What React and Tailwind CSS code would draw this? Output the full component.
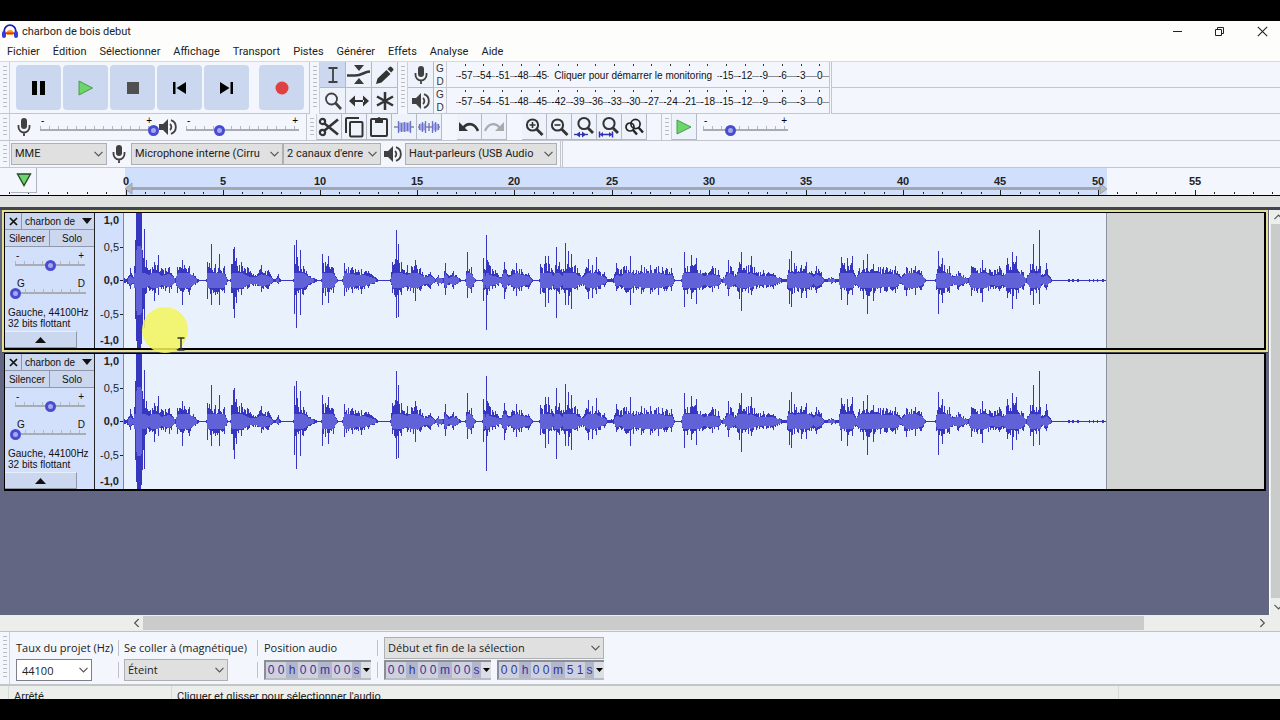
import React from "react";
import clsx from "clsx";

const MENUS = ["Fichier", "Édition", "Sélectionner", "Affichage", "Transport", "Pistes", "Générer", "Effets", "Analyse", "Aide"];
const METER_DB = [-57, -54, -51, -48, -45, -42, -39, -36, -33, -30, -27, -24, -21, -18, -15, -12, -9, -6, -3, 0];

// [x, peak above zero, peak below zero], in pixels from the clip start
const PEAKS = [
  [0, 2, 2], [3, 2, 3], [6, 12, 8], [9, 3, 3], [11, 40, 38], [12, 67, 60], [13, 67, 67], [14, 67, 67], [15, 67, 67], [16, 67, 67], [17, 67, 63],
  [18, 30, 48], [19, 22, 28], [20, 51, 47], [22, 20, 12], [25, 10, 10], [30, 18, 20], [34, 25, 14], [37, 12, 8], [41, 12, 10], [45, 13, 12],
  [51, 2, 2], [53, 13, 12], [58, 20, 24], [65, 14, 14], [71, 4, 4], [74, 1, 1], [82, 1, 1], [83, 18, 18], [87, 36, 24], [91, 16, 14],
  [95, 26, 24], [100, 14, 12], [103, 1, 1], [106, 1, 1], [107, 16, 12], [109, 31, 28], [110, 33, 37], [112, 22, 22], [117, 18, 14], [124, 12, 7],
  [131, 5, 5], [137, 15, 11], [144, 10, 8], [149, 1, 1], [154, 6, 3], [156, 1, 1], [169, 1, 1], [170, 35, 33], [172, 40, 47], [176, 30, 34],
  [179, 14, 14], [186, 4, 4], [192, 1, 1], [197, 1, 1], [198, 26, 24], [201, 18, 15], [204, 24, 22], [209, 12, 12], [213, 1, 1], [218, 1, 1],
  [220, 17, 15], [228, 13, 12], [234, 10, 9], [237, 11, 13], [244, 9, 7], [253, 1, 1], [266, 1, 1], [268, 18, 12], [272, 50, 37], [274, 36, 36],
  [277, 18, 14], [283, 15, 10], [291, 20, 20], [296, 12, 10], [301, 5, 5], [306, 8, 8], [311, 1, 1], [314, 5, 5], [319, 2, 2], [321, 17, 14],
  [324, 5, 4], [329, 9, 8], [336, 1, 1], [341, 1, 1], [343, 28, 17], [347, 13, 12], [351, 1, 1], [358, 1, 1], [359, 22, 20], [361, 10, 8],
  [362, 45, 49], [365, 15, 10], [371, 10, 7], [377, 3, 3], [380, 18, 18], [384, 5, 5], [392, 17, 15], [397, 11, 10], [404, 7, 8], [408, 1, 1],
  [415, 1, 1], [416, 16, 13], [421, 24, 26], [424, 24, 22], [429, 8, 8], [432, 33, 37], [435, 18, 13], [438, 8, 8], [441, 37, 24], [444, 29, 24],
  [447, 26, 28], [453, 12, 9], [459, 5, 5], [464, 21, 18], [468, 15, 17], [472, 23, 13], [476, 8, 8], [480, 8, 6], [483, 1, 1], [489, 2, 2],
  [492, 17, 10], [497, 11, 8], [506, 24, 24], [509, 10, 12], [517, 15, 13], [526, 15, 13], [534, 14, 14], [542, 12, 10], [547, 12, 10], [550, 1, 1],
  [557, 1, 1], [560, 28, 26], [563, 14, 13], [567, 25, 18], [572, 22, 23], [579, 7, 8], [588, 14, 11], [594, 10, 8], [597, 1, 1], [601, 5, 5],
  [604, 20, 15], [611, 6, 6], [615, 18, 18], [617, 28, 30], [624, 15, 12], [627, 24, 14], [632, 8, 8], [639, 10, 7], [649, 7, 8], [657, 2, 2],
  [662, 1, 1], [665, 21, 23], [667, 29, 26], [670, 17, 12], [677, 15, 17], [682, 18, 17], [689, 6, 7], [692, 14, 12], [697, 8, 6], [700, 1, 1],
  [707, 3, 3], [714, 1, 1], [717, 23, 19], [723, 22, 24], [728, 24, 14], [731, 5, 5], [739, 20, 18], [743, 26, 33], [749, 16, 20], [756, 13, 12],
  [762, 13, 11], [771, 14, 12], [777, 3, 3], [782, 13, 15], [791, 14, 14], [797, 9, 9], [801, 1, 1], [811, 1, 1], [814, 29, 33], [818, 22, 22],
  [825, 14, 12], [828, 5, 5], [834, 9, 9], [844, 2, 2], [847, 14, 15], [858, 20, 21], [866, 10, 8], [875, 14, 10], [879, 7, 7], [883, 22, 17],
  [888, 28, 28], [892, 24, 18], [899, 8, 9], [902, 2, 2], [906, 16, 14], [909, 36, 24], [912, 14, 12], [915, 50, 23], [917, 5, 5], [922, 17, 9],
  [927, 1, 1], [944, 1, 1], [945, 1, 1], [948, 1, 1], [949, 1, 1], [953, 1, 1], [954, 1, 1], [965, 1, 1], [969, 1, 1], [973, 1, 1], [978, 1, 1],
  [979, 1, 1], [981, 1, 1],
];

function buildWave() {
  let seed = 7;
  const rand = () => {
    seed = (seed * 16807) % 2147483647;
    return seed / 2147483647;
  };
  const zero = 67;
  let outer = "";
  let inner = "";
  let i = 0;
  for (let x = 0; x <= 981; x++) {
    while (i < PEAKS.length - 2 && PEAKS[i + 1][0] <= x) i++;
    const a = PEAKS[i];
    const b = PEAKS[i + 1];
    const t = (x - a[0]) / (b[0] - a[0]);
    const quiet = t > 0 && a[1] === 1 && b[1] === 1;
    let up = a[1] + (b[1] - a[1]) * t;
    let down = a[2] + (b[2] - a[2]) * t;
    const rms = Math.min(x > 11 && x < 18 ? 34 : 7, Math.min(up, down) * 0.5);
    if (t > 0 && t < 1) {
      up = Math.min(up, 8 + up * 0.4) * (0.45 + 0.55 * rand() ** 1.3);
      down = Math.min(down, 7 + down * 0.35) * (0.45 + 0.5 * rand() ** 1.3);
    }
    outer += `M${x + 0.5} ${zero - (quiet ? 0 : Math.round(up))}V${zero + 1 + (quiet ? 0 : Math.round(down))}`;
    if (rms > 1) inner += `M${x + 0.5} ${zero - Math.round(rms)}V${zero + 1 + Math.round(rms)}`;
  }
  return { outer, inner };
}

const WAVE = buildWave();

const MicIcon = ({ className }) => (
  <svg width="16" height="20" viewBox="0 0 16 20" className={clsx("shrink-0", className)} fill="none" stroke="#404040" aria-hidden="true">
    <rect x="5" y="1" width="6" height="11" rx="3" fill="#404040" stroke="none" />
    <path d="M2.5 8v2a5.5 5.5 0 0 0 11 0V8M8 15.500V19" strokeWidth="1.800" />
  </svg>
);

const SpeakerIcon = () => (
  <svg width="18" height="18" viewBox="0 0 18 18" className="shrink-0" fill="none" stroke="#404040" aria-hidden="true">
    <path d="M0 6h4l5-5v16l-5-5H0z" fill="#404040" stroke="none" />
    <path d="M11 6a4 4 0 0 1 0 6" strokeWidth="1.800" />
    <path d="M12 2.200a7.200 7.200 0 0 1 0 13.600" strokeWidth="1.800" />
  </svg>
);

const Glass = ({ children, small }) => (
  <svg width="22" height="22" viewBox="0 0 22 22" fill="none" stroke="#333" aria-hidden="true">
    <circle cx={small ? 11 : 9.5} cy={small ? 7.5 : 9} r="5.600" strokeWidth="2" />
    <path d={small ? "M15 12l5 5" : "M13.5 13l6 6"} strokeWidth="2.800" />
    {children}
  </svg>
);

const Chevron = ({ className }) => (
  <svg width="9" height="6" viewBox="0 0 9 6" className={className} fill="none" stroke="#555" strokeWidth="1.200" aria-hidden="true">
    <path d="M.5.8l4 4 4-4" />
  </svg>
);

function Grabber() {
  return (
    <div className="flex w-[10px] shrink-0 justify-center self-stretch border-r border-[#ccd0d6] py-1">
      <div className="w-1 bg-[repeating-linear-gradient(#b9bcc1_0_1px,transparent_1px_4px)]" />
    </div>
  );
}

function Select({ label, value, className }) {
  return (
    <div className={clsx("grid shrink-0 items-center", className)}>
      <select
        aria-label={label}
        className="col-start-1 row-start-1 h-[22px] w-full appearance-none border border-[#adb0b3] bg-[#dfe0df] pl-[3px] pr-4 pt-px text-[#222]"
      >
        <option>{value}</option>
      </select>
      <Chevron className="pointer-events-none col-start-1 row-start-1 mr-1 justify-self-end" />
    </div>
  );
}

function Slider({ label, value, ends = ["-", "+"], className }) {
  return (
    <div className={clsx("flex shrink-0 flex-col", className)}>
      <div className="flex h-[6px] items-center justify-between px-[7px] text-[10px] leading-[6px]">
        <span>{ends[0]}</span>
        <span>{ends[1]}</span>
      </div>
      <div className="grid items-center">
        <div className="col-start-1 row-start-1 mx-[6px] mb-1 h-[5px] border-b-2 border-[#a9acb2] bg-[repeating-linear-gradient(90deg,#b4b7bd_0_1px,transparent_1px_9px)]" />
        <input
          type="range"
          aria-label={label}
          defaultValue={value}
          className="col-start-1 row-start-1 h-3 w-full appearance-none bg-transparent [&::-webkit-slider-thumb]:size-[11px] [&::-webkit-slider-thumb]:appearance-none [&::-webkit-slider-thumb]:rounded-full [&::-webkit-slider-thumb]:border-[3px] [&::-webkit-slider-thumb]:border-[#4a4cd0] [&::-webkit-slider-thumb]:bg-[#a5a8ee]"
        />
      </div>
    </div>
  );
}

function TransportButton({ label, children, className }) {
  return (
    <button aria-label={label} className={clsx("flex size-[45px] items-center justify-center rounded bg-[#cbd7ee]", className)}>
      {children}
    </button>
  );
}

function ToolButton({ label, active, narrow, children }) {
  return (
    <button
      aria-label={label}
      className={clsx(
        "flex h-[26px] shrink-0 items-center justify-center overflow-hidden border-b border-r border-[#b4b9c4]",
        narrow ? "w-[25px]" : "w-[26px]",
        active ? "bg-[#cbd8f0]" : "bg-[#edf2fb]"
      )}
    >
      {children}
    </button>
  );
}

function Meter({ label, icon, message }) {
  const cells = message ? METER_DB.filter((db) => db < -42 || db > -18) : METER_DB;
  return (
    <div className="flex h-[26px] w-[421px] border-b border-[#c3c6cc]">
      <ToolButton label={label}>{icon}</ToolButton>
      <div className="flex w-[12px] flex-col items-center text-[10px] leading-[13px] text-[#333]">
        <span>G</span>
        <span>D</span>
      </div>
      <div className="flex-1 border-l border-[#c9ccd2] pl-[9px]">
        <div className="grid h-[6px] grid-cols-[repeat(20,minmax(0,1fr))] items-center justify-items-center">
          {METER_DB.map((db) => (
            <i key={db} className="h-[2px] w-px bg-[#333]" />
          ))}
        </div>
        <div className="grid h-[14px] grid-cols-[repeat(20,minmax(0,1fr))] items-center text-[10px] text-[#111]">
          {cells.map((db) => (
            <React.Fragment key={db}>
              {message && db === -15 && <span className="col-span-9 whitespace-nowrap text-center">{message}</span>}
              <span className="flex items-center justify-center">
                <i className="mt-px h-px flex-1 bg-[#8b8e94]" />
                {db}
                <i className="mt-px h-px flex-1 bg-[#8b8e94]" />
              </span>
            </React.Fragment>
          ))}
        </div>
      </div>
    </div>
  );
}

function Timeline() {
  const seconds = Array.from({ length: 66 }, (_, i) => i - 6);
  return (
    <div className="grid h-[28px] shrink-0 border-b border-black bg-[#f3f6fd]">
      <svg className="col-start-1 row-start-1 h-[27px] w-full" aria-label="Règle temporelle">
        <rect x="125" y="0" width="982" height="27" fill="#d0dffb" />
        <path d="M128 20.500H1105" stroke="#a2a6ae" strokeWidth="3" />
        <path d="M125 21l7-6v11zM1107 21l-7-6v11z" fill="#b5b9c1" stroke="#858990" strokeWidth=".6" />
        {seconds.map((s) => {
          const x = Math.round(125.5 + s * 19.44);
          const major = s % 5 === 0 && s >= 0;
          return <rect key={s} x={x} y={major ? 22 : 24} width="1" height={major ? 5 : 2} fill="#222" />;
        })}
        {seconds
          .filter((s) => s >= 0 && s < 60 && s % 5 === 0)
          .map((s) => (
            <text key={s} x={Math.round(125.5 + s * 19.44)} y="17" textAnchor="middle" fontSize="11" fontWeight="bold" fill="#222">
              {s}
            </text>
          ))}
      </svg>
      <button
        aria-label="Options de la règle"
        className="col-start-1 row-start-1 ml-[11px] flex h-[25px] w-[26px] items-center justify-center border-b border-r border-[#aeb3be] bg-[#f3f6fd]"
      >
        <svg width="16" height="14" viewBox="0 0 16 14" aria-hidden="true">
          <path d="M1.500 1h13L8 12.500z" fill="#6cd66c" stroke="#2b4a2b" strokeWidth="1.400" />
        </svg>
      </button>
    </div>
  );
}

const SCALE = [
  { text: "1,0", className: "font-bold" },
  { text: "0,5", className: "mt-[13px]", tick: true },
  { text: "0,0", className: "mt-[19px] font-bold", tick: true },
  { text: "-0,5", className: "mt-[20px]", tick: true },
  { text: "-1,0", className: "mt-[12px] font-bold" },
];

function Track({ selected }) {
  return (
    <section className={clsx("border-2", selected ? "border-[#e4df93]" : "border-x-transparent border-y-0")}>
      <div className="flex h-[138px] border-b-2 border-l border-r-2 border-t border-black">
        <div className="flex w-[90px] shrink-0 flex-col border-r border-[#222] bg-[#d2e0fb] text-[10px] text-[#111]">
          <div className="flex h-[17px] shrink-0 border-b border-[#8f97a8] bg-[#cbd7ee]">
            <button aria-label="Fermer la piste" className="flex w-[17px] items-center justify-center border-r border-[#8f97a8]">
              <svg width="9" height="9" viewBox="0 0 9 9" stroke="#111" strokeWidth="1.700" aria-hidden="true">
                <path d="M1 1l7 7M8 1L1 8" />
              </svg>
            </button>
            <button className="flex flex-1 items-center justify-between whitespace-nowrap pl-[3px] pr-[2px]">
              charbon de
              <svg width="10" height="6" viewBox="0 0 10 6" aria-hidden="true">
                <path d="M0 0h10L5 6z" fill="#111" />
              </svg>
            </button>
          </div>
          <div className="flex h-[17px] shrink-0 border-b border-[#8f97a8] bg-[#cbd7ee]">
            <button className="w-[45px] border-r border-[#8f97a8]">Silencer</button>
            <button className="flex-1">Solo</button>
          </div>
          <Slider label="Gain" value={50} className="ml-1 mt-[6px] w-[82px]" />
          <Slider label="Balance" value={0} ends={["G", "D"]} className="ml-[5px] mt-[10px] w-[82px]" />
          <p className="mt-2 whitespace-nowrap pl-[3px] text-[10px] leading-[11px]">
            Gauche, 44100Hz
            <br />
            32 bits flottant
          </p>
          <button
            aria-label="Replier la piste"
            className="mt-auto flex h-[17px] w-[72px] items-center justify-center border-b border-r border-t border-[#8f97a8] border-t-[#e8effc] bg-[#cbd7ee]"
          >
            <svg width="11" height="6" viewBox="0 0 11 6" aria-hidden="true">
              <path d="M0 6h11L5.500 0z" fill="#111" />
            </svg>
          </button>
        </div>
        <div className="w-[29px] shrink-0 border-r border-[#7f8798] bg-[#d2e0fb] text-[11px] leading-[14px] text-[#222]">
          {SCALE.map((s) => (
            <div key={s.text} className={clsx("flex h-[14px] items-center justify-end", s.className)}>
              {s.text}
              <i className={clsx("ml-px h-px w-[3px]", s.tick && "bg-[#222]")} />
            </div>
          ))}
        </div>
        <svg className="h-[135px] w-[982px] shrink-0 bg-[#e9f1fd]" shapeRendering="crispEdges" aria-label="Forme d'onde">
          <path d={WAVE.outer} stroke="#3636c0" />
          <path d={WAVE.inner} stroke="#6262d8" />
        </svg>
        <div className="flex-1 border-l border-[#8a909c] bg-[#d2d5d4]" />
      </div>
    </section>
  );
}

function TimeField({ label, digits }) {
  return (
    <div
      role="group"
      aria-label={label}
      className="flex h-5 w-[107px] items-center border-2 border-r-0 border-[#8b8e96] border-b-[#b9bcc4] bg-[#b3b7cb] font-['Liberation_Sans',Arial,sans-serif]"
    >
      {digits.split("").map((c, i) => (
        <span
          key={i}
          className={clsx(
            "text-center text-[12px] leading-4 text-[#3333a4]",
            /\d/.test(c) ? "w-[10px] bg-[#cfd2dd]" : c === "h" ? "w-3" : c === "m" ? "w-[14px]" : "w-[9px]"
          )}
        >
          {c}
        </span>
      ))}
      <button aria-label={`Format : ${label}`} className="flex h-4 flex-1 items-center justify-center bg-[#dcdee6]">
        <svg width="7" height="4" viewBox="0 0 7 4" aria-hidden="true">
          <path d="M0 0h7L3.500 4z" fill="#000" />
        </svg>
      </button>
    </div>
  );
}

function TitleBar() {
  return (
    <header className="flex h-5 shrink-0 items-center bg-[#fdfefc] pl-[2px]">
      <svg width="16" height="15" viewBox="0 0 16 15" aria-hidden="true">
        <path d="M2.200 9V7a5.800 5.800 0 0 1 11.600 0v2" fill="none" stroke="#1d1db4" strokeWidth="1.800" />
        <path d="M4 9q1-3 4-3t4 3l-1 2H5z" fill="#f59a23" />
        <path d="M4 9.200h8" stroke="#e22" strokeWidth="1.400" />
        <rect x="0" y="7" width="4" height="7" rx="2" fill="#3a3ad6" />
        <rect x="12" y="7" width="4" height="7" rx="2" fill="#3a3ad6" />
      </svg>
      <h1 className="ml-1 mt-[2px] flex-1 font-[Roboto,sans-serif] text-[11px] text-[#222]">charbon de bois debut</h1>
      <button aria-label="Réduire" className="flex h-5 w-[42px] items-center justify-center">
        <i className="h-px w-[9px] bg-[#222]" />
      </button>
      <button aria-label="Restaurer" className="flex h-5 w-[42px] items-center justify-center">
        <svg width="11" height="11" viewBox="0 0 11 11" fill="none" stroke="#222" aria-hidden="true">
          <path d="M1.500 3.500h6v6h-6zM3.500 3V1.500h6v6H8" />
        </svg>
      </button>
      <button aria-label="Fermer" className="flex h-5 w-[40px] items-center justify-center pl-1">
        <svg width="11" height="11" viewBox="0 0 11 11" stroke="#222" strokeWidth="1.100" aria-hidden="true">
          <path d="M.8.8l9.400 9.400M10.200.8L.8 10.200" />
        </svg>
      </button>
    </header>
  );
}

function MainToolbars() {
  return (
    <div className="flex h-[52px] shrink-0">
      <div className="flex w-[310px] shrink-0 items-center border-b border-r border-[#c3c6cc]">
        <Grabber />
        <div className="flex gap-[2px] pl-[6px]">
          <TransportButton label="Pause">
            <svg width="13" height="14" viewBox="0 0 13 14" aria-hidden="true">
              <path d="M0 0h5v14H0zM8 0h5v14H8z" fill="#000" />
            </svg>
          </TransportButton>
          <TransportButton label="Lecture">
            <svg width="16" height="16" viewBox="0 0 16 16" aria-hidden="true">
              <path d="M1 1l13.500 7L1 15z" fill="#6cd66c" stroke="#4a9a4a" />
            </svg>
          </TransportButton>
          <TransportButton label="Arrêt">
            <svg width="12" height="12" aria-hidden="true">
              <rect width="12" height="12" fill="#505050" />
            </svg>
          </TransportButton>
          <TransportButton label="Aller au début">
            <svg width="13" height="12" viewBox="0 0 13 12" aria-hidden="true">
              <path d="M0 0h2.500v12H0zM13 0v12L3.500 6z" fill="#000" />
            </svg>
          </TransportButton>
          <TransportButton label="Aller à la fin">
            <svg width="13" height="12" viewBox="0 0 13 12" aria-hidden="true">
              <path d="M10.500 0H13v12h-2.500zM0 0v12l9.500-6z" fill="#000" />
            </svg>
          </TransportButton>
          <TransportButton label="Enregistrer" className="ml-[8px]">
            <svg width="14" height="14" aria-hidden="true">
              <circle cx="7" cy="7" r="6.500" fill="#e04040" />
            </svg>
          </TransportButton>
        </div>
      </div>
      <Grabber />
      <div className="grid grid-cols-3">
        <ToolButton label="Sélection" active>
          <svg width="12" height="16" viewBox="0 0 12 16" stroke="#404040" strokeWidth="1.800" aria-hidden="true">
            <path d="M1.500 1h9M1.500 15h9M6 1v14" />
          </svg>
        </ToolButton>
        <ToolButton label="Enveloppe">
          <svg width="24" height="20" viewBox="0 0 24 20" fill="#3a3a3a" aria-hidden="true">
            <path d="M7 0h10l-5 6zM7 19h10l-5-6z" />
            <path d="M0 10.500h8q4 0 8-2t7-2" fill="none" stroke="#3a3a3a" strokeWidth="2.600" />
          </svg>
        </ToolButton>
        <ToolButton label="Retouche">
          <svg width="18" height="18" viewBox="0 0 18 18" fill="#333" aria-hidden="true">
            <path d="M0 18l1.500-5.500L10.500 4l4 4L5.500 16.500zM11.500 3l2-2q1-1 2 0l1.500 1.500q1 1 0 2l-1.800 2z" />
          </svg>
        </ToolButton>
        <ToolButton label="Zoom">
          <svg width="20" height="20" viewBox="0 0 20 20" fill="none" stroke="#404040" aria-hidden="true">
            <circle cx="8.500" cy="8" r="5.500" strokeWidth="1.800" />
            <path d="M12.500 12l5.500 6" strokeWidth="2.600" />
          </svg>
        </ToolButton>
        <ToolButton label="Glissement temporel">
          <svg width="20" height="12" viewBox="0 0 20 12" fill="#333" aria-hidden="true">
            <path d="M0 6l6-5.500v11zM20 6l-6-5.500v11zM5 4.900h10v2.200H5z" />
          </svg>
        </ToolButton>
        <ToolButton label="Multi-outils">
          <svg width="20" height="20" viewBox="0 0 20 20" stroke="#333" strokeWidth="2.500" aria-hidden="true">
            <path d="M10 1v18M2 5.500l16 9M18 5.500l-16 9" />
          </svg>
        </ToolButton>
      </div>
      <Grabber />
      <div className="border-r border-[#c3c6cc]">
        <Meter label="Vumètre d'enregistrement" icon={<MicIcon />} message="Cliquer pour démarrer le monitoring" />
        <Meter label="Vumètre de lecture" icon={<SpeakerIcon />} />
      </div>
      <div className="ml-px flex-1 border-b border-l border-[#c3c6cc]">
        <div className="h-[26px] border-b border-[#c3c6cc]" />
      </div>
    </div>
  );
}

function EditToolbars() {
  return (
    <div className="flex h-[27px] shrink-0 items-center border-b border-[#c3c6cc]">
      <Grabber />
      <div className="flex w-[297px] shrink-0 items-center self-stretch border-r border-[#c3c6cc] pl-[6px]">
        <MicIcon />
        <Slider label="Volume d'enregistrement" value={100} className="ml-[2px] w-[125px]" />
        <SpeakerIcon />
        <Slider label="Volume de lecture" value={30} className="ml-[3px] w-[125px]" />
      </div>
      <Grabber />
      <div className="flex">
        <ToolButton narrow label="Couper">
          <svg width="22" height="20" viewBox="0 0 22 20" fill="none" stroke="#333" strokeWidth="2.200" aria-hidden="true">
            <circle cx="4.500" cy="4.500" r="2.600" />
            <circle cx="4.500" cy="15.500" r="2.600" />
            <path d="M6.500 6.500L20 17.500M6.500 13.500L20 2.500" strokeWidth="2.600" />
          </svg>
        </ToolButton>
        <ToolButton narrow label="Copier">
          <svg width="20" height="22" viewBox="0 0 20 22" fill="none" stroke="#333" strokeWidth="2" aria-hidden="true">
            <rect x="6" y="6" width="12.500" height="14.500" rx="1" />
            <path d="M2 17V3q0-1 1-1h12" />
          </svg>
        </ToolButton>
        <ToolButton narrow label="Coller">
          <svg width="18" height="21" viewBox="0 0 18 21" fill="none" stroke="#333" strokeWidth="2" aria-hidden="true">
            <rect x="1" y="3" width="16" height="17" rx="1" />
            <path d="M5 2h8v5H5z" fill="#333" stroke="none" />
            <circle cx="9" cy="2.500" r="1.500" fill="#333" stroke="none" />
          </svg>
        </ToolButton>
        <ToolButton narrow label="Rogner">
          <svg width="20" height="14" viewBox="0 0 20 14" fill="none" stroke="#6c72c8" aria-hidden="true">
            <path d="M0 7h20" stroke="#555" />
            <path d="M5 2.500h11v9H5z" fill="#a9aee6" stroke="none" />
            <path d="M4.500 1v12M7.500 3v9M10.500 2v10M13.500 3v8M16.500 1v12" strokeWidth="1.300" />
          </svg>
        </ToolButton>
        <ToolButton narrow label="Silence">
          <svg width="22" height="14" viewBox="0 0 22 14" fill="none" stroke="#6c72c8" aria-hidden="true">
            <path d="M0 7h22" stroke="#555" />
            <path d="M2 3.500h5v7H2zM15 3.500h5v7h-5z" fill="#a9aee6" stroke="none" />
            <path d="M1.500 4v6M4.500 2v10M7.500 1v12M14.500 1v12M17.500 2v10M20.500 4v6M11 3v8" strokeWidth="1.300" />
          </svg>
        </ToolButton>
      </div>
      <div className="ml-[15px] flex">
        <ToolButton narrow label="Annuler">
          <svg width="20" height="14" viewBox="0 0 20 14" aria-hidden="true">
            <path d="M0 2v9h9z" fill="#333" />
            <path d="M4 8q4-5 9-3.500 4 1.500 6 6.500" fill="none" stroke="#333" strokeWidth="2.600" />
          </svg>
        </ToolButton>
        <ToolButton narrow label="Rétablir">
          <svg width="20" height="14" viewBox="0 0 20 14" aria-hidden="true">
            <path d="M20 2v9h-9z" fill="#aaa" />
            <path d="M16 8q-4-5-9-3.500-4 1.500-6 6.500" fill="none" stroke="#aaa" strokeWidth="2.200" />
          </svg>
        </ToolButton>
      </div>
      <div className="ml-[15px] flex">
        <ToolButton narrow label="Zoom avant">
          <Glass>
            <path d="M9.500 6v6M6.500 9h6" strokeWidth="1.600" />
          </Glass>
        </ToolButton>
        <ToolButton narrow label="Zoom arrière">
          <Glass>
            <path d="M6.500 9h6" strokeWidth="1.600" />
          </Glass>
        </ToolButton>
        <ToolButton narrow label="Ajuster à la sélection">
          <Glass small>
            <path d="M1 18.500h14" stroke="#3030b0" strokeWidth="1.300" />
            <path d="M3 18.500l4-3v6zM13 18.500l-4-3v6z" fill="#3030b0" stroke="none" />
          </Glass>
        </ToolButton>
        <ToolButton narrow label="Ajuster au projet">
          <Glass small>
            <path d="M1.500 18.500h13M1.500 15.500v6M14.500 15.500v6" stroke="#3030b0" strokeWidth="1.500" />
            <path d="M2 18.500l3-2.500v5zM14 18.500l-3-2.500v5z" fill="#3030b0" stroke="none" />
          </Glass>
        </ToolButton>
        <ToolButton narrow label="Basculer le zoom">
          <svg width="20" height="20" viewBox="0 0 20 20" fill="none" stroke="#222" aria-hidden="true">
            <circle cx="6" cy="10" r="4" strokeWidth="1.700" />
            <circle cx="11.500" cy="7" r="4.600" strokeWidth="1.700" />
            <path d="M9 13l4 4.500M14.500 10.500l4.500 5" strokeWidth="2.400" />
          </svg>
        </ToolButton>
      </div>
      <div className="ml-[14px] self-stretch border-l border-[#c3c6cc]" />
      <Grabber />
      <ToolButton narrow label="Lecture à vitesse">
        <svg width="16" height="16" viewBox="0 0 16 16" aria-hidden="true">
          <path d="M1 1l14 7-14 7z" fill="#6cd66c" stroke="#4a9a4a" />
        </svg>
      </ToolButton>
      <Slider label="Vitesse de lecture" value={33} className="w-[97px]" />
    </div>
  );
}

function DeviceToolbar() {
  return (
    <div className="flex h-[27px] shrink-0 items-center border-b border-[#c3c6cc] font-[Roboto,sans-serif] text-[11px]">
      <Grabber />
      <Select label="Hôte audio" value="MME" className="ml-px w-24" />
      <MicIcon className="mx-1" />
      <Select label="Périphérique d'enregistrement" value="Microphone interne (Cirru" className="w-[152px]" />
      <Select label="Canaux" value="2 canaux d'enre" className="w-[98px]" />
      <div className="ml-[3px] mr-[3px]">
        <SpeakerIcon />
      </div>
      <Select label="Périphérique de lecture" value="Haut-parleurs (USB Audio" className="w-[152px]" />
      <div className="ml-[3px] w-[3px] self-stretch border-x border-[#c3c6cc]" />
    </div>
  );
}

function SelectionBar() {
  const rule = <i className="h-4 w-px shrink-0 bg-[#bfc2c8]" />;
  return (
    <div className="flex h-[52px] shrink-0 bg-[#f3f6fd] font-['Open_Sans',sans-serif] text-[11px] text-[#222]">
      <Grabber />
      <div className="flex items-start pt-[5px]">
        <div className="ml-[6px] flex w-[103px] flex-col">
          <div className="flex h-[22px] items-center justify-between whitespace-nowrap">
            <label htmlFor="rate">Taux du projet (Hz)</label>
            {rule}
          </div>
          <div className="flex h-[22px] items-center justify-between">
            <div className="grid w-[76px] items-center">
              <input id="rate" defaultValue="44100" className="col-start-1 row-start-1 h-[22px] w-full border border-[#7d8086] bg-white pl-[5px]" />
              <Chevron className="pointer-events-none col-start-1 row-start-1 mr-1 justify-self-end" />
            </div>
            {rule}
          </div>
        </div>
        <div className="ml-[5px] flex w-[134px] flex-col">
          <div className="flex h-[22px] items-center justify-between whitespace-nowrap">
            <span>Se coller à (magnétique)</span>
            {rule}
          </div>
          <div className="flex h-[22px] items-center justify-between">
            <Select label="Se coller à (magnétique)" value="Éteint" className="w-[104px]" />
            {rule}
          </div>
        </div>
        <div className="ml-[6px] flex w-[114px] flex-col">
          <div className="flex h-[22px] items-center justify-between whitespace-nowrap">
            <span>Position audio</span>
            {rule}
          </div>
          <div className="flex h-[22px] items-center justify-between">
            <TimeField label="Position audio" digits="00h00m00s" />
            {rule}
          </div>
        </div>
        <div className="ml-[6px] flex w-[220px] flex-col">
          <Select label="Mode de sélection" value="Début et fin de la sélection" className="w-full" />
          <div className="flex h-[22px] items-center justify-between">
            <TimeField label="Début de la sélection" digits="00h00m00s" />
            <TimeField label="Fin de la sélection" digits="00h00m51s" />
          </div>
        </div>
      </div>
    </div>
  );
}

export default function App() {
  return (
    <div className="flex h-screen flex-col overflow-hidden bg-black py-[21px] font-['Liberation_Sans',Arial,sans-serif]">
      <TitleBar />
      <nav className="flex h-[21px] shrink-0 items-center gap-[13px] border-b border-[#d6d8da] bg-[#fdfefc] pl-[7px] pt-[2px] font-[Roboto,sans-serif] text-[11px] text-[#222]">
        {MENUS.map((m) => (
          <button key={m}>{m}</button>
        ))}
      </nav>
      <div className="shrink-0 bg-[#f3f6fd]">
        <MainToolbars />
        <EditToolbars />
        <DeviceToolbar />
      </div>
      <Timeline />
      <div className="h-[14px] shrink-0 border-b-[3px] border-[#41454f] bg-[#e0e2e1]" />

      <main className="flex min-h-0 flex-1 bg-[#636683]">
        <div className="relative min-w-0 flex-1 overflow-hidden pl-[2px] pr-px">
          <Track selected />
          <div className="h-px bg-[#41454f]" />
          <Track />
          {/* Click halo and text cursor */}
          <div className="absolute left-[142px] top-[97px] size-[46px] rounded-full bg-[#f3f65c]/85" />
          <svg width="8" height="14" viewBox="0 0 8 14" className="absolute left-[177px] top-[127px]" fill="none" stroke="#333" strokeWidth="1.500" aria-hidden="true">
            <path d="M.5 1h7M.5 13h7M4 1v12" />
          </svg>
        </div>
        <div className="flex w-[11px] shrink-0 flex-col overflow-hidden border-l border-white bg-[#eceeec]">
          <button aria-label="Défiler vers le haut" className="flex h-[14px] w-4 items-center justify-center">
            <Chevron className="rotate-180" />
          </button>
          <div className="ml-px w-4 flex-1 bg-[#cacccb]" />
          <button aria-label="Défiler vers le bas" className="flex h-[17px] w-4 items-center justify-center">
            <Chevron />
          </button>
        </div>
      </main>

      <div className="flex h-[17px] shrink-0 border-b border-[#bfc1c3] bg-[#eceeec] pl-[129px]">
        <button aria-label="Défiler à gauche" className="flex w-[14px] items-center justify-center">
          <Chevron className="rotate-90" />
        </button>
        <div className="my-px flex-[1001] bg-[#cacccb]" />
        <div className="flex-[112]" />
        <button aria-label="Défiler à droite" className="mr-[11px] flex w-[13px] items-center justify-center">
          <Chevron className="-rotate-90" />
        </button>
      </div>
      <SelectionBar />
      <footer className="flex h-[15px] shrink-0 overflow-hidden border-t-2 border-[#c3c6c8] bg-[#eceeec] font-[Roboto,sans-serif] text-[11px] leading-[22px] text-[#222]">
        <span className="ml-2 w-[163px] border-l border-[#d8dad8] pl-[5px]">Arrêté</span>
        <span className="flex-1 border-l border-[#d8dad8] pl-[5px]">Cliquer et glisser pour sélectionner l'audio.</span>
        <span className="w-[162px] border-l border-[#d8dad8]" />
      </footer>
    </div>
  );
}
